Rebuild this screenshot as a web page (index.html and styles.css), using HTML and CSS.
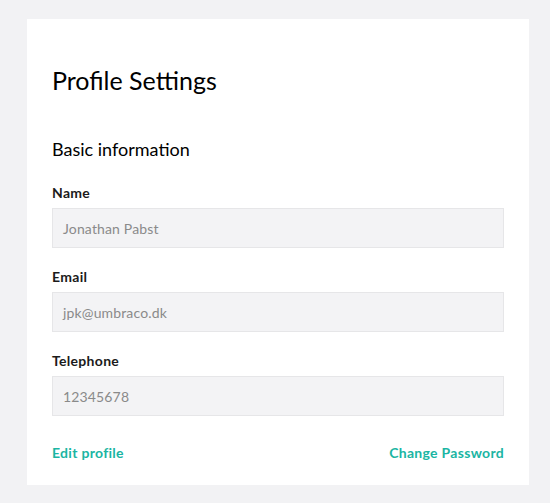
FILE: index.html
```html
<!DOCTYPE html>
<html>
<head>
<meta charset="utf-8">
<link rel="stylesheet" href="styles.css">
</head>
<body>
<div class="card">
  <h1 class="title">Profile Settings</h1>
  <h2 class="subtitle">Basic information</h2>
  <div class="field">
    <label class="label">Name</label>
    <div class="input">Jonathan Pabst</div>
  </div>
  <div class="field">
    <label class="label">Email</label>
    <div class="input">jpk@umbraco.dk</div>
  </div>
  <div class="field">
    <label class="label">Telephone</label>
    <div class="input">12345678</div>
  </div>
  <div class="actions">
    <a class="link">Edit profile</a>
    <a class="link">Change Password</a>
  </div>
</div>
</body>
</html>
```
FILE: styles.css
```css
html, body {
  margin: 0;
  background: #f2f2f4;
}
body {
  padding: 19px 0 0 27px;
  font-family: Lato, "Open Sans", sans-serif;
  color: #000;
}
.card {
  width: 452px;
  height: 420px;
  background: #fff;
  padding: 46px 25px 0 25px;
}
.title {
  margin: 0;
  font-size: 25px;
  line-height: 30px;
  font-weight: 400;
}
.subtitle {
  margin: 42px 0 0 0;
  font-size: 18px;
  line-height: 24px;
  font-weight: 400;
}
.field {
  margin-top: 24px;
  display: flex;
  flex-direction: column;
}
.field + .field {
  margin-top: 21px;
}
.label {
  font-size: 14px;
  font-weight: 700;
  line-height: 16px;
  letter-spacing: 0.3px;
  color: #1b1b1b;
  margin-bottom: 7px;
}
.input {
  box-sizing: border-box;
  height: 40px;
  border: 1px solid #e6e6e8;
  background: #f3f3f5;
  padding: 0 10px;
  display: flex;
  align-items: center;
  font-size: 14px;
  letter-spacing: 0.15px;
  color: #8a8a8a;
}
.actions {
  margin-top: 29px;
  display: flex;
  justify-content: space-between;
}
.link {
  font-size: 14px;
  font-weight: 700;
  line-height: 16px;
  letter-spacing: 0.3px;
  color: #1bb5a3;
  cursor: pointer;
}
```
